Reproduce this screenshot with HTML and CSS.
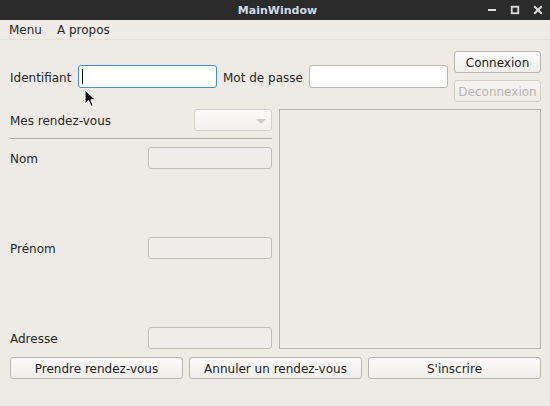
FILE: index.html
```html
<!DOCTYPE html>
<html>
<head>
<meta charset="utf-8">
<link rel="stylesheet" href="styles.css">
</head>
<body>
<div class="window">
  <div class="titlebar">
    <span class="title">MainWindow</span>
    <div class="controls">
      <svg class="ctl" width="10" height="10" viewBox="0 0 10 10"><rect x="1" y="4" width="8" height="2" fill="#dcdcdc"/></svg>
      <svg class="ctl" width="10" height="10" viewBox="0 0 10 10"><rect x="1.75" y="1.75" width="6.5" height="6.5" fill="none" stroke="#dcdcdc" stroke-width="1.8"/></svg>
      <svg class="ctl" width="10" height="10" viewBox="0 0 10 10"><path d="M1.2 1.2 L8.8 8.8 M8.8 1.2 L1.2 8.8" stroke="#dcdcdc" stroke-width="2"/></svg>
    </div>
  </div>
  <div class="menubar">
    <span class="menuitem">Menu</span>
    <span class="menuitem">A propos</span>
  </div>
  <div class="main">
    <div class="toprow">
      <span class="lbl">Identifiant</span>
      <div class="input focus"><span class="caret"></span></div>
      <span class="lbl">Mot de passe</span>
      <div class="input"></div>
      <div class="btncol">
        <div class="btn">Connexion</div>
        <div class="btn disabled">Deconnexion</div>
      </div>
    </div>
    <div class="midrow">
      <div class="leftcol">
        <div class="rdvrow">
          <span class="lbl">Mes rendez-vous</span>
          <div class="combo"><span class="arrow"></span></div>
        </div>
        <div class="sep"></div>
        <div class="form">
          <div class="frow"><span class="lbl">Nom</span><div class="field"></div></div>
          <div class="frow"><span class="lbl">Prénom</span><div class="field"></div></div>
          <div class="frow"><span class="lbl">Adresse</span><div class="field"></div></div>
        </div>
      </div>
      <div class="panel"></div>
    </div>
    <div class="bottomrow">
      <div class="btn">Prendre rendez-vous</div>
      <div class="btn">Annuler un rendez-vous</div>
      <div class="btn">S'inscrire</div>
    </div>
  </div>
  <svg class="pointer" width="13" height="19" viewBox="0 0 13 19">
    <path d="M1 1 L1 15 L4.5 11.5 L7 17.5 L9.2 16.5 L6.8 10.8 L11.5 10.8 Z" fill="#111" stroke="#fff" stroke-width="1" stroke-linejoin="round"/>
  </svg>
</div>
</body>
</html>
```

FILE: styles.css
```css
html, body {
  margin: 0;
  padding: 0;
}
body {
  font-family: "DejaVu Sans", sans-serif;
  font-size: 12px;
  color: #262626;
  background: #eeebe7;
}
.window {
  position: relative;
  width: 550px;
  height: 406px;
  background: #eeebe7;
  overflow: hidden;
}
.titlebar {
  height: 20px;
  background: #2b2b2b;
  display: flex;
  align-items: center;
  justify-content: center;
  position: relative;
}
.title {
  font-weight: bold;
  font-size: 11px;
  color: #cfdce8;
  margin-left: 5px;
  padding-top: 1px;
}
.controls {
  position: absolute;
  right: 7px;
  top: 5px;
  display: flex;
  gap: 13px;
}
.ctl {
  display: block;
}
.menubar {
  height: 19px;
  display: flex;
  align-items: center;
  padding-left: 9px;
  gap: 15px;
  background: #efece8;
  border-bottom: 1px solid #e2ded9;
}
.menuitem {
  line-height: 19px;
  padding-top: 1px;
}
.main {
  padding: 11px 9px 0 10px;
  display: flex;
  flex-direction: column;
}
.toprow {
  height: 51px;
  display: flex;
  align-items: center;
}
.lbl {
  white-space: nowrap;
  margin-top: 2px;
}
.toprow .lbl:first-child {
  width: 61px;
  margin-right: 7px;
}
.toprow .lbl:nth-child(3) {
  width: 80px;
  margin-left: 6px;
  margin-right: 6px;
}
.input {
  width: 139px;
  height: 23px;
  box-sizing: border-box;
  background: #fff;
  border: 1px solid #bab6b1;
  border-radius: 3px;
  position: relative;
}
.input.focus {
  border-color: #4a8cc9;
}
.caret {
  position: absolute;
  left: 3px;
  top: 3px;
  width: 1px;
  height: 15px;
  background: #111;
}
.btncol {
  margin-left: 6px;
  width: 87px;
  display: flex;
  flex-direction: column;
  gap: 7px;
}
.btn {
  height: 22px;
  box-sizing: border-box;
  padding-top: 2px;
  border: 1px solid #b9b5b0;
  border-radius: 3px;
  background: linear-gradient(#fcfbfa, #f0eeeb);
  display: flex;
  align-items: center;
  justify-content: center;
  white-space: nowrap;
  color: #222;
}
.btn.disabled {
  color: #bab6b2;
  border-color: #d2cec9;
  background: linear-gradient(#f5f3f0, #efece8);
}
.midrow {
  margin-top: 7px;
  height: 240px;
  display: flex;
  gap: 7px;
}
.leftcol {
  width: 262px;
  display: flex;
  flex-direction: column;
}
.rdvrow {
  height: 22px;
  display: flex;
  align-items: center;
  justify-content: space-between;
}
.combo {
  width: 78px;
  height: 22px;
  box-sizing: border-box;
  border: 1px solid #d3cfca;
  border-radius: 3px;
  background: linear-gradient(#fbfaf9, #f3f1ee);
  position: relative;
}
.arrow {
  position: absolute;
  right: 5px;
  top: 9px;
  width: 0;
  height: 0;
  border-left: 5px solid transparent;
  border-right: 5px solid transparent;
  border-top: 5px solid #cfcbc6;
}
.sep {
  margin-top: 7px;
  height: 1px;
  background: #a9a5a0;
  border-bottom: 1px solid #f8f6f4;
}
.form {
  margin-top: 7px;
  flex: 1;
  display: flex;
  flex-direction: column;
  justify-content: space-between;
}
.frow {
  height: 22px;
  display: flex;
  align-items: center;
  justify-content: space-between;
}
.field {
  width: 124px;
  height: 22px;
  box-sizing: border-box;
  border: 1px solid #c2beb9;
  border-radius: 3px;
  background: #efece9;
}
.panel {
  width: 262px;
  box-sizing: border-box;
  border: 1px solid #b6b2ad;
  background: #eeebe7;
}
.bottomrow {
  margin-top: 8px;
  display: grid;
  grid-template-columns: 173px 173px 173px;
  gap: 6px;
}
.pointer {
  position: absolute;
  left: 84px;
  top: 89px;
}
```
